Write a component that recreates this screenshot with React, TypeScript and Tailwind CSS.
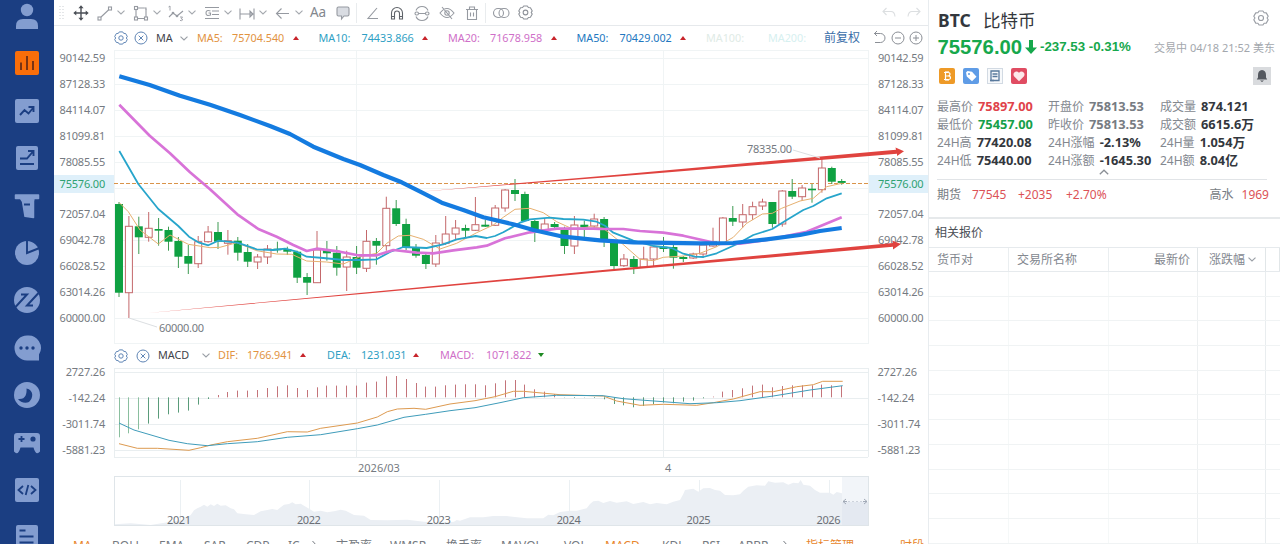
import React from 'react';

type Pt = [number, number];
// Curves are digitised on tiles at three units per pixel.
const tile = (ox: number, oy: number, flat: number[]): Pt[] => {
  const out: Pt[] = [];
  for (let i = 0; i < flat.length; i += 2) out.push([ox + flat[i] / 3, oy + flat[i + 1] / 3]);
  return out;
};
const pts = (list: Pt[]) => list.map(([x, y]) => `${x.toFixed(1)},${y.toFixed(1)}`).join(' ');
const X0 = 119;
const STEP = 9.9;

const ma50 = [
  ...tile(110, 60, [28, 49, 119, 75, 210, 107, 300, 134, 390, 165, 480, 198, 540, 222, 610, 260, 700, 297]),
  ...tile(360, 130, [0, 105, 70, 135, 125, 157, 185, 187, 245, 218, 310, 240, 370, 262, 460, 283, 520, 300, 610, 320, 690, 328]),
  ...tile(600, 130, [0, 331, 100, 337, 300, 340, 400, 339, 500, 328, 600, 315, 660, 303, 725, 294]),
];
const ma20 = [
  ...tile(110, 60, [28, 134, 119, 227, 180, 280, 240, 337, 300, 388, 382, 463, 445, 507, 500, 530, 550, 555, 590, 573, 620, 566, 690, 575, 740, 585]),
  ...tile(360, 130, [0, 376, 50, 376, 100, 360, 170, 368, 220, 370, 280, 361, 350, 352, 380, 347, 435, 325, 510, 307, 590, 296, 700, 296]),
  ...tile(600, 130, [0, 297, 70, 297, 120, 303, 190, 308, 250, 317, 310, 331, 360, 342, 420, 341, 500, 330, 620, 305, 725, 262]),
];
const ma10 = [
  ...tile(110, 60, [28, 273, 85, 372, 145, 447, 205, 498, 237, 530, 265, 547, 295, 556, 325, 542, 382, 548, 440, 568, 490, 570, 525, 566, 560, 575, 590, 590, 640, 594, 700, 600]),
  ...tile(360, 130, [0, 390, 50, 388, 90, 366, 130, 351, 200, 354, 250, 343, 290, 328, 347, 318, 380, 324, 405, 318, 430, 307, 480, 278, 510, 268, 570, 263, 610, 267, 670, 269, 710, 275]),
  ...tile(600, 130, [15, 287, 40, 308, 100, 332, 160, 348, 215, 354, 250, 371, 285, 380, 310, 381, 350, 370, 410, 343, 460, 315, 517, 297, 560, 270, 610, 240, 640, 228, 680, 205, 725, 190]),
];
const ma5 = [
  ...tile(110, 60, [28, 428, 55, 455, 90, 510, 145, 552, 180, 525, 235, 553, 300, 563, 330, 562, 380, 548, 440, 572, 500, 582, 545, 583, 590, 603, 650, 606, 700, 612]),
  ...tile(360, 130, [0, 380, 50, 370, 80, 340, 115, 318, 150, 316, 190, 328, 240, 357, 290, 340, 350, 308, 400, 285, 430, 262, 465, 238, 510, 235, 550, 248, 590, 275, 640, 298, 690, 290]),
  ...tile(600, 130, [10, 295, 60, 335, 120, 388, 160, 392, 190, 382, 250, 378, 300, 370, 350, 350, 400, 322, 440, 280, 487, 252, 517, 250, 545, 235, 600, 213, 640, 205, 680, 170, 725, 160]),
];
const dif = [
  ...tile(54, 340, [195, 311, 250, 325, 310, 325, 405, 331, 440, 323, 470, 315, 520, 305, 610, 295, 700, 275, 760, 276, 800, 265, 910, 249, 970, 231, 1000, 215, 1030, 207, 1080, 205, 1115, 208]),
  ...tile(450, 340, [0, 192, 75, 182, 135, 170, 190, 154, 220, 154, 330, 164, 460, 168, 500, 183, 570, 196, 640, 193, 740, 196, 790, 188, 850, 177, 930, 155, 970, 155, 1040, 140, 1090, 134, 1118, 124, 1178, 124]),
];
const dea = [
  ...tile(54, 340, [195, 249, 240, 270, 345, 301, 400, 311, 460, 317, 520, 311, 610, 305, 700, 292, 800, 284, 910, 266, 970, 255, 1050, 232, 1115, 223]),
  ...tile(450, 340, [0, 212, 75, 203, 150, 188, 220, 173, 320, 166, 460, 167, 520, 176, 640, 185, 720, 191, 800, 188, 870, 182, 970, 168, 1080, 150, 1178, 137]),
];
const history = [
  ...tile(54, 340, [182, 556, 182, 553, 230, 550, 290, 555, 350, 545, 385, 540, 400, 530, 410, 525, 420, 511, 430, 505, 440, 500, 450, 494, 460, 500, 470, 493, 480, 498, 490, 491, 500, 497, 515, 496, 530, 505, 540, 508, 550, 520, 575, 523, 600, 525, 620, 514, 640, 510, 655, 507, 670, 510, 680, 502, 690, 494, 705, 492, 715, 487, 725, 493, 740, 491, 755, 500, 780, 515, 800, 512, 820, 517, 840, 514, 860, 509, 875, 512, 900, 525, 930, 527, 950, 540, 1000, 541, 1060, 539, 1110, 545, 1150, 548, 1200, 545]),
  ...tile(450, 340, [20, 540, 30, 542, 60, 532, 100, 532, 130, 528, 170, 528, 230, 535, 280, 535, 295, 524, 310, 526, 330, 516, 360, 512, 380, 512, 410, 505, 420, 492, 430, 484, 445, 482, 460, 489, 480, 483, 500, 488, 530, 484, 550, 492, 580, 486, 600, 493, 620, 489, 650, 493, 670, 485, 690, 480, 700, 462, 705, 450, 730, 446, 745, 455, 760, 445, 780, 444, 795, 450, 810, 452, 825, 465, 850, 466, 870, 463, 880, 452, 895, 440, 920, 436, 945, 437, 955, 424, 975, 428, 1000, 427, 1015, 434, 1030, 428, 1045, 430, 1052, 420, 1060, 434, 1080, 437, 1095, 450, 1110, 458, 1140, 458, 1150, 464, 1160, 456, 1176, 460, 1176, 556]),
];

type Candle = [0 | 1, number, number, number, number];
// [rising, body top, body bottom, wick top, wick bottom]
const candles: Candle[] = [
  [0, 204, 292.7, 202, 297], [1, 226.3, 292.7, 216, 318], [0, 226.3, 237.3, 216.7, 254], [1, 228.3, 237.3, 212, 241.7],
  [0, 229, 230.7, 218, 245.7], [0, 230, 241.7, 226.7, 250.7], [0, 241, 256.7, 237, 268], [0, 256, 263.7, 245, 274],
  [1, 241.7, 263.7, 236, 268], [1, 232, 241.7, 226, 242.7], [0, 232, 241.7, 222, 249], [1, 240.7, 243.3, 230, 254.7],
  [0, 240.7, 252.7, 237, 260.7], [0, 252, 261.7, 244, 267], [1, 257, 262, 254, 269], [1, 249, 257, 245, 264],
  [0, 248.7, 250.3, 241.7, 252.7], [0, 249, 251.7, 246.7, 255], [0, 251.7, 277.7, 250.7, 283], [0, 277, 282.7, 273, 295],
  [1, 250, 282.7, 231, 282.7], [0, 249, 253.3, 241, 260.7], [0, 252.7, 267.7, 246, 275.7], [1, 257, 267, 250.7, 291],
  [0, 257, 267.7, 246, 274], [1, 241.3, 268.3, 230, 272], [0, 241, 245.7, 238, 264.7], [1, 208.3, 245.7, 196.7, 250.7],
  [0, 208.3, 224, 200, 226], [0, 224, 247.3, 218.7, 250], [0, 248, 255.7, 244, 257.7], [0, 255, 264, 252, 269],
  [1, 243, 264, 235, 267], [1, 234, 243.3, 216, 245], [1, 228, 234, 220, 239], [0, 228, 230.7, 224.7, 238],
  [1, 224.7, 230.3, 197, 231], [0, 224.7, 226.7, 220, 227], [1, 208, 225.3, 205, 226], [1, 190, 208, 189, 211.7],
  [0, 190, 194, 179, 201], [0, 194, 221, 191.7, 221], [0, 221, 230.3, 220, 242], [1, 224, 230, 218.7, 234],
  [0, 224, 227, 222, 229], [0, 228, 246, 226.7, 254], [1, 225, 246, 216, 254], [0, 224.7, 227.3, 220.7, 238],
  [1, 219, 226, 213.7, 229], [0, 219, 242, 217, 247], [0, 242, 266, 242, 269], [1, 259, 265.7, 254, 267],
  [0, 259, 267, 256, 274], [1, 259, 267, 246.7, 267.7], [1, 247, 259, 246.7, 266], [0, 246.7, 249, 237, 252],
  [0, 247, 257.7, 243, 268.7], [0, 257, 259, 256, 262], [1, 254, 258, 252.7, 259], [1, 245, 254, 243, 258],
  [1, 241.7, 246, 227.7, 246.7], [1, 218, 243, 217, 243], [0, 218, 221.7, 206, 226], [1, 214.7, 222, 204, 227.7],
  [1, 206.7, 214.7, 201.7, 220], [1, 202, 206, 198.7, 210], [0, 202, 224, 202, 227.7], [1, 191, 224, 190, 226.7],
  [0, 191, 196.7, 179, 199], [1, 188, 196.7, 185, 201], [0, 188.7, 190.3, 184, 202.7], [1, 168, 189.7, 159, 192.7],
  [0, 168, 181.7, 166.7, 184], [0, 181, 182.9, 179, 184.7],
];
const hist = [
  -120, -108, -96, -79, -64, -51, -46, -40, -22, -5, 7, 16, 20, 20, 22, 28, 33, 36, 28, 22, 30, 35, 35, 35, 35, 44, 47, 63,
  64, 55, 43, 32, 32, 36, 38, 39, 39, 36, 42, 51, 52, 38, 24, 17, 10, -1, -2, -1, -2, -6, -20, -24, -30, -26, -20, -16, -18,
  -13, -10, -3, 2, 17, 22, 27, 35, 38, 30, 34, 36, 36, 36, 38, 36, 34,
];

const TriUp = () => <svg width="6" height="4" className="shrink-0"><path d="M0 4 3 0 6 4Z" fill="#c8242b" /></svg>;
const TriDown = () => <svg width="6" height="4" className="shrink-0"><path d="M0 0 3 4 6 0Z" fill="#1e8a22" /></svg>;
const Chev = ({ c = '#9a9fa6' }: { c?: string }) => (
  <svg width="8" height="5" fill="none" stroke={c} strokeWidth="1.1" className="shrink-0"><path d="m.5.6 3.500 3.400L7.500.6" /></svg>
);
const Hex = ({ size = 14, c = '#5f85b5' }: { size?: number; c?: string }) => (
  <svg width={size} height={size} viewBox="0 0 14 14" fill="none" stroke={c} strokeWidth="1" className="shrink-0">
    <path d="M5.300.900h3.400l1 1.500 1.900.1 1.700 3-1 1.500 1 1.500-1.700 3-1.900.1-1 1.500H5.300l-1-1.500-1.900-.1-1.700-3 1-1.500-1-1.500 1.700-3 1.900-.1Z" strokeLinejoin="round" />
    <circle cx="7" cy="7" r="2.200" />
  </svg>
);
const XCircle = () => (
  <svg width="14" height="14" fill="none" stroke="#5f85b5"><circle cx="7" cy="7" r="6" /><path d="m4.700 4.700 4.600 4.600m0-4.600-4.600 4.600" /></svg>
);

const Ico = ({ children, c = '#969aa1', w = 18 }: { children: React.ReactNode; c?: string; w?: number }) => (
  <svg width={w} height="18" viewBox={`0 0 ${w} 18`} fill="none" stroke={c} strokeWidth="1.1" className="shrink-0">{children}</svg>
);

const drawTools = [
  <Ico key="line"><rect x="2" y="13" width="3" height="3" /><rect x="12.500" y="3" width="3" height="3" /><path d="M5 13 12.500 6" /></Ico>,
  <Ico key="rect"><path d="M5.500 4H12.500M4 5.500V13M14 5.500V13M5.500 14.500H12.500" /><rect x="2.500" y="2.500" width="3" height="3" /><rect x="2.500" y="13" width="3" height="3" /><rect x="12.500" y="13" width="3" height="3" /><path d="M12.500 4H14v2" /></Ico>,
  <Ico key="wave"><path d="m2 13 4-4 4 3 6-5" /><circle cx="6" cy="9" r=".8" /><circle cx="10" cy="12" r=".8" /><path d="M1.500 3 3 2v4.500M13 13h2.500l-1.300 1.800q1.700 0 1.300 1.300-.8 1-2.500.3" strokeWidth=".9" /></Ico>,
  <Ico key="gann"><path d="M2 3.500h14M9 7h7M9 10.500h7M2 14.500h14M7.500 7Q3 5.500 3 9t4.500 2V9H5.500" /></Ico>,
  <Ico key="range"><path d="M2 4.500v11M16 4.500v11M2 10h13M12 7v6l3-3Z" /></Ico>,
  <Ico key="arrow"><path d="M3 9.500h12M7.500 4.500l-5 5 5 5" /></Ico>,
];
const editTools = [
  <Ico key="angle"><path d="M14 4 5 14.500h10" /></Ico>,
  <Ico key="magnet" c="#5f6369"><path d="M3.500 15V9a5.500 5.500 0 0 1 11 0v6h-3V9.500a2.500 2.500 0 0 0-5 0V15Zm0-2.500h3m5 0h3" /></Ico>,
  <Ico key="link"><path d="M3 6.500a6.500 6.500 0 0 1 12 0M3 12.500a6.500 6.500 0 0 0 12 0M5.500 9.500h7" /><rect x="2" y="8" width="3.500" height="3" rx="1.500" /><rect x="12.500" y="8" width="3.500" height="3" rx="1.500" /></Ico>,
  <Ico key="eye"><path d="M2 9q7-9 14 0-7 9-14 0ZM4 3l10 12" /><circle cx="9" cy="9" r="2.200" /></Ico>,
  <Ico key="trash"><path d="M3 5.500h12M6.500 5V3h5v2M4.500 6v9.500h9V6M7.500 8.500v4m3-4v4" /></Ico>,
];

const S = '#839dd0';
const D = '#1b3e82';
const sideIcons = [
  <g key="0"><circle cx="13" cy="7" r="6.200" fill={S} /><path d="M2 26v-3q0-7 7-7h8q7 0 7 7v3Z" fill={S} /></g>,
  <g key="1"><rect x="1" y="1" width="24" height="24" rx="2" fill="#fa6e0a" /><path d="M7 12.500V20M13 6v14M19 11v9" stroke="#7a3414" strokeWidth="2" /></g>,
  <g key="2"><rect x="1" y="1" width="24" height="24" rx="2" fill={S} /><path d="m6 17 4.500-5 4 3.500L19 10M14.500 9h5v5" stroke={D} strokeWidth="1.900" fill="none" /></g>,
  <g key="3"><rect x="2" y="1" width="22" height="24" rx="2" fill={S} /><path d="M6 13.500h7l6-7M14 6h5.500v5M6 19h14" stroke={D} strokeWidth="1.900" fill="none" /></g>,
  <g key="4"><path d="M1.500 2h23v3.500H20l-.5 3V24.500l-8.500-1.200L8.500 8.500 6.500 5.500h-5Z" fill={S} stroke={S} strokeWidth="1.500" strokeLinejoin="round" /><path d="M10 11.500h6" stroke={D} strokeWidth="2" /></g>,
  <g key="5"><circle cx="13" cy="13" r="12" fill={S} /><path d="M13 0v13L25.500 8" stroke={D} strokeWidth="1.900" fill="none" /></g>,
  <g key="6"><circle cx="13" cy="13" r="13" fill={S} /><path d="M1.500 20 13 7.500H7M24.500 6 13 18.500h6" stroke={D} strokeWidth="2" fill="none" /></g>,
  <g key="7"><path d="M13 .5a12.500 12.500 0 1 0 0 25h12v-6A12.500 12.500 0 0 0 13 .5Z" fill={S} /><g fill={D}><circle cx="7" cy="13" r="1.700" /><circle cx="13" cy="13" r="1.700" /><circle cx="19" cy="13" r="1.700" /></g></g>,
  <g key="8"><circle cx="13" cy="13" r="13" fill={S} /><path d="M12.500 6.500c7.500 1.500 7 9.500 2.500 13.500-4 2-9 0-11-3 7.500 1 9-5 8.500-10.500Z" fill={D} /></g>,
  <g key="9"><path d="M3 3h20a3 3 0 0 1 3 3v15.500q-4 5-6.500-4h-13q-2.500 9-6.500 4V6a3 3 0 0 1 3-3Z" fill={S} /><path d="M4.500 9h6M7.500 6v6" stroke={D} strokeWidth="1.800" /><circle cx="19" cy="9" r="2.600" fill={D} /></g>,
  <g key="10"><rect x="1" y="1" width="24" height="24" rx="2" fill={S} /><path d="m9 9-4.500 4L9 17m8-8 4.500 4-4.500 4M14.300 8l-2.600 10" stroke={D} strokeWidth="1.800" fill="none" /></g>,
  <g key="11"><rect x="2" y="1" width="22" height="24" rx="2" fill={S} /><path d="M5.500 6.500h6M5.500 12.500h14M5.500 18.500h14" stroke={D} strokeWidth="1.900" /></g>,
];

const Sidebar = () => (
  <nav className="flex h-full w-[54px] shrink-0 flex-col items-center gap-[21.400px] bg-[#1b3e82] pt-[3px]">
    {sideIcons.map((icon, i) => (
      <svg key={i} width="26" height="26" viewBox="0 0 26 26" className="shrink-0 overflow-visible">{icon}</svg>
    ))}
  </nav>
);

const Toolbar = () => (
  <div className="flex h-[26px] shrink-0 items-center border-b border-[#e6e9ec]">
    <div className="flex w-[15px] shrink-0 justify-center">
      <svg width="5" height="14" stroke="#c9cdd2" strokeDasharray="1 2"><path d="M1 0v14M4 0v14" /></svg>
    </div>
    <div className="flex w-[26px] shrink-0 pl-[3px]">
      <Ico c="#4a4e55"><path d="M9 3v12M3 9h12" strokeWidth="1.400" /><path d="m9 1.300 2.600 3H6.400ZM9 16.700l2.600-3H6.400ZM1.300 9l3-2.600v5.200ZM16.700 9l-3-2.600v5.200Z" fill="#4a4e55" stroke="none" /></Ico>
    </div>
    {drawTools.map((t, i) => (
      <div key={i} className="flex w-[35.600px] shrink-0 items-center gap-[2px]"><div className="flex w-5 justify-center">{t}</div><Chev c="#a5a9af" /></div>
    ))}
    <div className="-ml-[2.500px] w-[24px] text-center text-[13.500px] text-[#83878e]">Aa</div>
    <div className="flex w-[25px] justify-center">
      <Ico><path d="M3 4.500q0-1.500 1.500-1.500h9q1.500 0 1.500 1.500v6q0 1.500-1.500 1.500H10l-2.500 3v-3h-3Q3 12 3 10.500Z" fill="#d9dce2" /></Ico>
    </div>
    <div className="ml-px h-5 w-px bg-[#e9ecee]" />
    <div className="ml-[3px] flex">
      {editTools.map((t, i) => <div key={i} className="flex w-[24.800px] justify-center">{t}</div>)}
    </div>
    <div className="ml-px h-5 w-px bg-[#e9ecee]" />
    <div className="ml-[2px] flex w-[25px] justify-center">
      <Ico><rect x="1.500" y="4.500" width="10" height="9" rx="4.500" /><rect x="7" y="4.500" width="10" height="9" rx="4.500" /></Ico>
    </div>
    <div className="flex w-[25px] justify-center"><Hex size={15} c="#8e9299" /></div>
    <div className="ml-auto flex gap-[11px] pr-[7px]">
      <Ico w={14} c="#dcdfe1"><path d="M4.500 4 1 7.500 4.500 11M1 7.500h8q3.500 0 4 5" /></Ico>
      <Ico w={14} c="#dcdfe1"><path d="M9.500 4 13 7.500 9.500 11M13 7.500H5q-3.500 0-4 5" /></Ico>
    </div>
  </div>
);

const maRow = [
  { n: 'MA5:', v: '75704.540', c: 'text-[#e2933f]', lw: 'w-[35px]' },
  { n: 'MA10:', v: '74433.866', c: 'text-[#2f9fc4]', lw: 'w-[43px]' },
  { n: 'MA20:', v: '71678.958', c: 'text-[#cf6fc8]', lw: 'w-[42px]' },
  { n: 'MA50:', v: '70429.002', c: 'text-[#2277c0]', lw: 'w-[43px]' },
];

const IndicatorRow = () => (
  <div className="flex h-[24px] shrink-0 items-center pl-[60px] text-[10.800px]">
    <Hex />
    <div className="ml-[6px] shrink-0"><XCircle /></div>
    <span className="ml-[8px] w-[24px] shrink-0 text-[#3f4349]">MA</span>
    <Chev />
    <div className="w-[9px] shrink-0" />
    {maRow.map((m) => (
      <div key={m.n} className={`mr-[18px] flex shrink-0 items-center ${m.c}`}>
        <span className={m.lw}>{m.n}</span>
        <span className="w-[60.500px]">{m.v}</span>
        <div className="flex w-[8px]"><TriUp /></div>
      </div>
    ))}
    <span className="w-[62px] shrink-0 text-[#e0ebe6]">MA100:</span>
    <span className="w-[56px] shrink-0 text-[#d6f0f0]">MA200:</span>
    <span className="w-[49px] shrink-0 whitespace-nowrap text-[12px] text-[#3a6ea8]">前复权</span>
    <svg width="50" height="16" fill="none" stroke="#8b8f96" className="-mr-2 shrink-0">
      <path d="M1 3.500h6.500a4.500 4.500 0 0 1 0 9H2M4 1 1.500 3.500 4 6" />
      <circle cx="25" cy="8" r="6" /><path d="M22 8h6" />
      <circle cx="43" cy="8" r="6" /><path d="M40 8h6M43 5v6" />
    </svg>
  </div>
);

const prices = ['90142.59', '87128.33', '84114.07', '81099.81', '78085.55', '75576.00', '72057.04', '69042.78', '66028.52', '63014.26', '60000.00'];
const macdTicks = ['2727.26', '-142.24', '-3011.74', '-5881.23'];

const Axis = ({ right }: { right?: boolean }) => (
  <div className={`-mt-[5.500px] flex shrink-0 flex-col text-[11px] tracking-[-0.200px] text-[#757a81] ${right ? 'w-[60px]' : 'w-[60px]'}`}>
    {prices.map((p, i) => (
      <div key={p} className={`flex h-[26px] shrink-0 items-center ${i === 5 ? 'pb-[8px]' : ''}`}>
        <span className={`flex h-[18px] w-full items-center ${right ? 'pl-[10px]' : 'justify-end pr-[9px]'} ${i === 5 ? 'bg-[#dff0fa] text-[#2fa272]' : ''}`}>{p}</span>
      </div>
    ))}
  </div>
);
const MacdAxis = ({ right }: { right?: boolean }) => (
  <div className={`-mt-[9.500px] flex shrink-0 flex-col text-[11px] tracking-[-0.200px] text-[#757a81] ${right ? 'w-[60px] pl-[9.500px]' : 'w-[60px] items-end pr-[9px]'}`}>
    {macdTicks.map((p) => <span key={p} className="flex h-[26px] shrink-0 items-center">{p}</span>)}
  </div>
);

const PricePlot = () => (
  <svg width="754" height="293" viewBox="114 50 754 293" className="relative z-10 shrink-0 overflow-visible">
    <g stroke="#f0f4f5" fill="none">
      <rect x="114.500" y="50.500" width="754" height="293" />
      {prices.map((_, i) => <path key={i} d={`M114 ${58.5 + i * 26}H868`} />)}
      <path d="M356.500 50V343M663.500 50V343" />
    </g>
    <path d="M114 183.500H868" stroke="#d9944a" strokeDasharray="4 2" />
    {candles.map(([up, t, b, wt, wb], i) => {
      const x = X0 + i * STEP;
      return up ? (
        <g key={i} stroke="#c4686b" fill="#fff"><path d={`M${x} ${wt}V${wb}`} /><rect x={x - 3.500} y={t} width="7" height={b - t} /></g>
      ) : (
        <g key={i}><path d={`M${x} ${wt}V${wb}`} stroke="#3d9a52" /><rect x={x - 4} y={t} width="8" height={Math.max(b - t, 1.5)} fill="#0fa142" /></g>
      );
    })}
    <g fill="none" strokeLinejoin="round">
      <polyline points={pts(ma5)} stroke="#e6b070" strokeWidth="1" />
      <polyline points={pts(ma10)} stroke="#27a5cb" strokeWidth="1.800" />
      <polyline points={pts(ma20)} stroke="#d873d8" strokeWidth="2.700" />
      <polyline points={pts(ma50)} stroke="#147be0" strokeWidth="4.200" />
    </g>
    <g fill="#e0433f">
      <path d="M148 313 370 292 600 270.300 893 243 892 240.500 901 243.900 893 249.500 893 246.800 600 272.200 370 293.300Z" />
      <path d="M420 191.700 620 174.400 896 149.800 895.500 147.500 904 151.300 897 156 897 153.800 620 176.200Z" />
    </g>
    <path d="M129 318 157 327M793 150l27 8" stroke="#dcdfe2" fill="none" />
    <g fontSize="11" fill="#757a81">
      <text x="747" y="153" textLength="45">78335.00</text>
      <text x="159" y="332" textLength="45">60000.00</text>
    </g>
  </svg>
);

const MacdPlot = () => (
  <svg width="754" height="89" viewBox="114 368 754 89" className="shrink-0 overflow-visible">
    <g stroke="#e9eef0" fill="none">
      <path d="M114 368.500H868M114 372.500H868M114 398.500H868M114 424.500H868M114 450.500H868M114 457.500H868M114.500 368V457M868.500 368V457M356.500 368V457M663.500 368V457" />
    </g>
    {hist.map((h, i) => {
      const x = Math.floor(X0 + i * STEP) + 0.5;
      return <path key={i} d={`M${x} 397.300V${(397.3 - h / 3).toFixed(1)}`} stroke={h > 0 ? '#c4747a' : i < 3 ? '#8abf9f' : '#5a9c7a'} />;
    })}
    <polyline points={pts(dif)} fill="none" stroke="#dd9a50" />
    <polyline points={pts(dea)} fill="none" stroke="#3f9cba" />
  </svg>
);

const Overview = () => (
  <svg width="754" height="50" viewBox="114 476 754 50" className="ml-[60px] shrink-0 overflow-visible">
    <path d="M180.500 480V525M309.500 480V525M439.500 480V525M569.500 480V525M699.500 480V525M829.500 480V525" stroke="#ebf0f3" />
    <polygon points={pts(history)} fill="#ebeff4" />
    <rect x="842" y="476" width="26" height="26" fill="#f2f5f9" />
    <rect x="842" y="502" width="26" height="24" fill="#e4e9f1" />
    <rect x="114.500" y="476.500" width="754" height="49" fill="none" stroke="#dfe5e9" />
    <path d="M843 501.500h4M846 499l-3 2.500 3 2.500M863 501.500h4M864 499l3 2.500-3 2.500" fill="none" stroke="#9aa3b0" strokeWidth=".9" />
    <path d="M848 501.500h14" stroke="#cdd3dc" strokeDasharray="2 2" />
    <g fontSize="11" fill="#6b7077" textAnchor="middle">
      {['2021', '2022', '2023', '2024', '2025', '2026'].map((y, i) => <text key={y} x={179 + i * 129.9} y="524" textLength="24">{y}</text>)}
    </g>
  </svg>
);

const tabs: [string, string, boolean?][] = [
  ['MA', 'w-[39px]', true], ['BOLL', 'w-[47px]'], ['EMA', 'w-[45px]'], ['SAR', 'w-[42px]'], ['CDP', 'w-[42px]'], ['IC', 'w-[23px]'], ['', 'w-[25px]'],
  ['市盈率', 'w-[54px]'], ['WMSR', 'w-[56px]'], ['换手率', 'w-[55px]'], ['MAVOL', 'w-[63px]'], ['VOL', 'w-[41px]'], ['MACD', 'w-[57px]', true],
  ['KDJ', 'w-[40px]'], ['RSI', 'w-[36px]'], ['ARBR', 'w-[44px]'], ['', 'w-[24px]'], ['指标管理', 'w-[94px]', true], ['时段', 'w-[28px]', true],
];

const ChartPanel = () => (
  <section className="flex w-[875px] shrink-0 flex-col border-r border-[#e8ecef]">
    <Toolbar />
    <IndicatorRow />
    <div className="flex h-[293px] shrink-0"><Axis /><PricePlot /><Axis right /></div>
    <div className="flex h-[25px] shrink-0 items-center pl-[60px] text-[10.800px]">
      <Hex />
      <div className="ml-[8px]"><XCircle /></div>
      <span className="ml-[8px] w-[44px] text-[#3f4349]">MACD</span>
      <Chev />
      <div className="ml-[8px] flex items-center text-[#e2933f]"><span className="w-[29px]">DIF:</span><span className="w-[53px] tracking-[-0.100px]">1766.941</span><TriUp /></div>
      <div className="ml-[21px] flex items-center text-[#2f9fc4]"><span className="w-[34px]">DEA:</span><span className="w-[52px] tracking-[-0.100px]">1231.031</span><TriUp /></div>
      <div className="ml-[21px] flex items-center text-[#cf6fc8]"><span className="w-[46px]">MACD:</span><span className="w-[52px] tracking-[-0.100px]">1071.822</span><TriDown /></div>
    </div>
    <div className="flex h-[89px] shrink-0"><MacdAxis /><MacdPlot /><MacdAxis right /></div>
    <div className="flex h-[19px] shrink-0 items-center pt-px text-[11px] text-[#757a81]">
      <span className="ml-[304px] w-[307px]">2026/03</span><span>4</span>
    </div>
    <Overview />
    <div className="flex h-[40px] shrink-0 items-center whitespace-nowrap pl-[19px] text-[12px] text-[#757a81]">
      {tabs.map(([t, w, on], i) => (
        <span key={i} className={`shrink-0 ${w} ${on ? 'text-[#e8862c]' : ''}`}>
          {t || <svg width="8" height="12" fill="none" stroke="#757a81"><path d="m1.500 1 4.500 5-4.500 5" /></svg>}
        </span>
      ))}
    </div>
  </section>
);

const stats: [string, string, string][][] = [
  [['最高价', '75897.00', 'text-[#e0434a]'], ['最低价', '75457.00', 'text-[#16a04a]'], ['24H高', '77420.08', 'text-[#33373d]'], ['24H低', '75440.00', 'text-[#33373d]']],
  [['开盘价', '75813.53', 'text-[#777c83]'], ['昨收价', '75813.53', 'text-[#777c83]'], ['24H涨幅', '-2.13%', 'text-[#33373d]'], ['24H涨额', '-1645.30', 'text-[#33373d]']],
  [['成交量', '874.121', 'text-[#33373d]'], ['成交额', '6615.6万', 'text-[#33373d]'], ['24H量', '1.054万', 'text-[#33373d]'], ['24H额', '8.04亿', 'text-[#33373d]']],
];
const statCols = ['w-[111px]', 'w-[112px]', 'w-[110px]'];

const QuotePanel = () => (
  <aside className="flex min-w-0 flex-1 flex-col whitespace-nowrap">
    <div className="flex h-[219px] shrink-0 flex-col border-b-2 border-[#e6e9eb] pl-[8px]">
      <div className="mt-[8px] flex h-[25px] items-center">
        <span className="ml-px w-[45px] text-[17.500px] font-bold text-[#33373d]">BTC</span>
        <span className="text-[17.500px] text-[#33373d]">比特币</span>
        <div className="-mt-[5px] ml-auto mr-[11px]"><Hex size={16} c="#9a9ea5" /></div>
      </div>
      <div className="flex h-[28px] items-center font-['Liberation_Sans'] font-bold text-[#16a84c]">
        <span className="w-[87px] pl-[0.500px] text-[20.300px]">75576.00</span>
        <svg width="14" height="16" viewBox="0 0 14 16" className="shrink-0"><path d="M5 1h4v7.500h4L7 15 1 8.500h4Z" fill="#16a84c" /></svg>
        <span className="ml-[2px] text-[13.300px]">-237.53 -0.31%</span>
        <span className="ml-auto mr-[5px] font-['Noto_Sans','Noto_Sans_CJK_SC',sans-serif] text-[11px] font-normal text-[#a3a7ad]">交易中 04/18 21:52 美东</span>
      </div>
      <div className="mt-[5px] flex h-[20px] items-center gap-2 pl-[2px]">
        <svg width="16" height="16"><rect width="16" height="16" rx="2" fill="#ee9a27" /><path d="M5 4.500h4q2 0 2 1.700T9 8H6.500M9 8q2.500 0 2.500 1.800T9 11.500H5M6.500 4.500v7M7 3v1.500M9 3v1.500M7 11.500V13M9 11.500V13" stroke="#fff" fill="none" strokeWidth="1.200" /></svg>
        <svg width="16" height="16"><rect width="16" height="16" rx="2" fill="#5f9ce6" /><path d="M3 4.500 4.500 3 9 3.800l4.500 5L9 13.300 3.800 8.500Z" fill="#fff" /><circle cx="6" cy="6" r="1" fill="#5f9ce6" /></svg>
        <svg width="16" height="16"><rect x=".5" y=".5" width="15" height="15" fill="#f7f9fb" stroke="#d2dae3" /><path d="M4 3h8v9.500H4ZM5.500 6h5M5.500 8.500h5" fill="none" stroke="#58799c" strokeWidth="1.300" /><path d="M3 12.500h4" stroke="#58799c" strokeWidth="1.500" /></svg>
        <svg width="16" height="16"><rect width="16" height="16" rx="2" fill="#e04c62" /><path d="M8 13.200 3 8.300C1 5.300 5 1.700 8 4.800c3-3.100 7 .5 5 3.500Z" fill="#fde8ea" /></svg>
        <svg width="18" height="18" className="ml-auto mr-[9px]"><rect width="18" height="18" fill="#d9dbde" /><path d="M9 3q4 .5 4 5v2.500l1.200 2H3.800l1.200-2V8Q5 3.500 9 3ZM7 13.500h4L9 15Z" fill="#54585f" /></svg>
      </div>
      <div className="mt-[11.500px] flex">
        {stats.map((col, ci) => (
          <div key={ci} className={`flex shrink-0 flex-col ${statCols[ci]}`}>
            {col.map(([k, v, c]) => (
              <div key={k} className="flex h-[18px] items-center gap-[5px]"><span className="text-[12px] text-[#83888f]">{k}</span><span className={`text-[12.800px] font-bold ${c}`}>{v}</span></div>
            ))}
          </div>
        ))}
      </div>
      <div className="-mt-px flex h-[9.500px] items-start pl-[162px]">
        <svg width="10" height="6" fill="none" stroke="#8b8f96" strokeWidth="1.300"><path d="m.8 5.200 4.200-4 4.200 4" /></svg>
      </div>
      <div className="mr-[13px] mt-px border-t border-[#e1e4e7]" />
      <div className="flex h-[30px] items-center text-[12px] text-[#dc5257]">
        <span className="w-[35px] text-[#777c83]">期货</span><span className="w-[46px]">77545</span><span className="w-[48px]">+2035</span><span>+2.70%</span>
        <span className="ml-auto text-[#777c83]">高水</span><span className="ml-[8px] mr-[11px]">1969</span>
      </div>
    </div>
    <div className="flex h-[28px] shrink-0 items-center pl-[6px] text-[12px] text-[#4a4e55]">相关报价</div>
    <div className="grid h-[25px] shrink-0 grid-cols-[80px_100px_89px_68px_14px] border-y border-[#e6eaed] text-[12px] text-[#83888f]">
      <span className="flex items-center border-r border-[#eaeef0] pl-[8px]">货币对</span>
      <span className="flex items-center border-r border-[#eaeef0] pl-[8px]">交易所名称</span>
      <span className="flex items-center justify-end border-r border-[#e1e6e8] pr-[7px]">最新价</span>
      <span className="flex items-center gap-[3px] border-r border-[#e1e6e8] pl-[11px]">涨跌幅<Chev /></span>
      <span className="border-r border-[#e1e6e8]" />
    </div>
    {Array.from({ length: 12 }, (_, i) => (
      <div key={i} className="grid h-[24.700px] shrink-0 grid-cols-[80px_100px_89px_68px_14px] border-b border-[#f0f3f4]">
        <span className="border-r border-[#f5f8f8]" /><span className="border-r border-[#f5f8f8]" /><span className="border-r border-[#edf0f1]" /><span className="border-r border-[#e9edef]" />
      </div>
    ))}
  </aside>
);

export default function App() {
  return (
    <main className="flex h-[544px] w-[1280px] overflow-hidden bg-white font-['Noto_Sans','Noto_Sans_CJK_SC',sans-serif] leading-none">
      <Sidebar />
      <ChartPanel />
      <QuotePanel />
    </main>
  );
}
